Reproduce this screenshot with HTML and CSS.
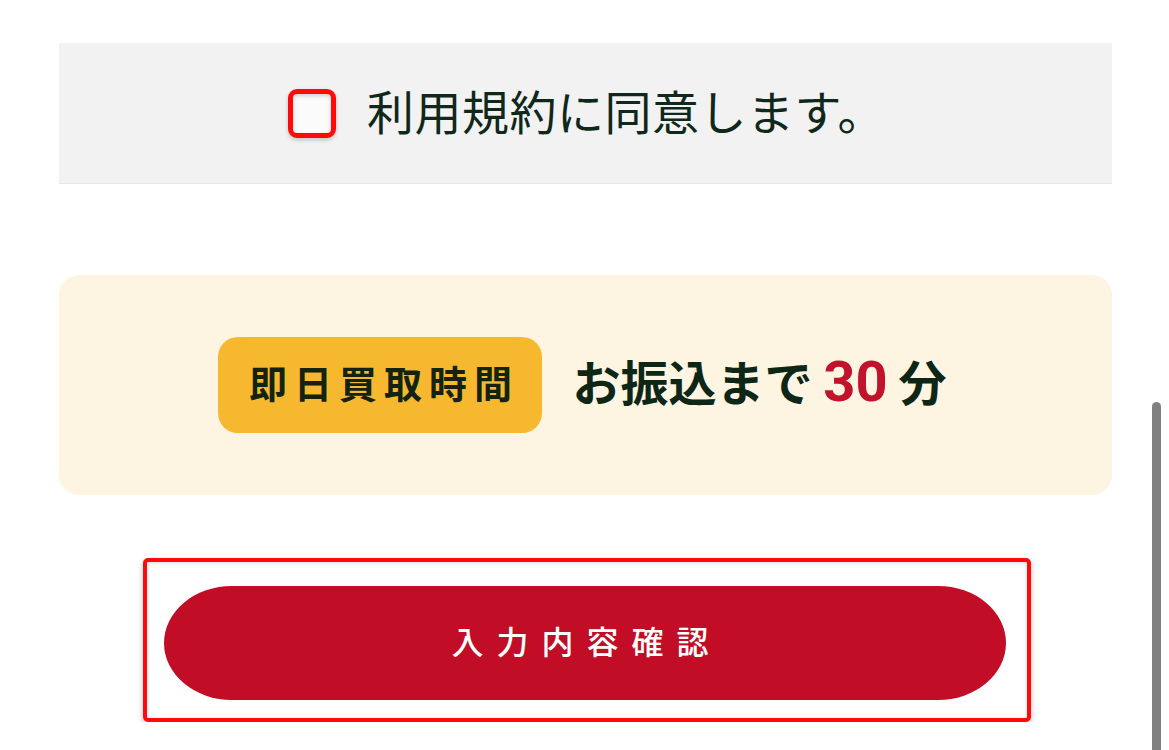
FILE: index.html
```html
<!DOCTYPE html>
<html lang="ja">
<head>
<meta charset="utf-8">
<title>確認</title>
<link rel="stylesheet" href="styles.css">
</head>
<body>
<main class="page">
  <section class="agree">
    <label class="agree-label">
      <span class="checkbox"></span>
      <span class="agree-text">利用規約に同意します。</span>
    </label>
  </section>

  <section class="notice">
    <span class="badge">即日買取時間</span>
    <p class="notice-text">お振込まで <span class="num">30</span> 分</p>
  </section>

  <div class="highlight">
    <button class="submit" type="button">入力内容確認</button>
  </div>
</main>
<div class="scrollbar"></div>
</body>
</html>
```

FILE: styles.css
```css
html, body {
  margin: 0;
  padding: 0;
  background: #ffffff;
  overflow: hidden;
}

body {
  font-family: "Noto Sans CJK JP", "Noto Sans", sans-serif;
  color: #0d2616;
}

.page {
  padding: 43px 57px 0 59px;
}

.agree {
  height: 140px;
  background: #f1f2f1;
  display: flex;
  align-items: center;
  justify-content: center;
  box-shadow: 0 1px 0 #e6e7e6;
}

.agree-label {
  display: flex;
  align-items: center;
  gap: 31px;
  margin-left: 2px;
}

.checkbox {
  width: 38px;
  height: 39px;
  border: 5px solid #ff0a0a;
  border-radius: 9px;
  background: #fbfbfb;
  box-shadow: inset 0 2px 4px rgba(0, 0, 0, 0.18), 0 2px 4px rgba(0, 0, 0, 0.2);
}

.agree-text {
  font-size: 47px;
  line-height: 1;
  font-weight: 400;
  color: #10271b;
  letter-spacing: 0.5px;
  margin-bottom: 7px;
}

.notice {
  margin-top: 92px;
  height: 220px;
  background: #fef4e2;
  border-radius: 20px;
  display: flex;
  align-items: center;
  justify-content: center;
  gap: 30px;
}

.badge {
  width: 324px;
  height: 96px;
  box-sizing: border-box;
  background: #f6b82f;
  border-radius: 20px;
  display: flex;
  align-items: center;
  justify-content: center;
  padding: 0 0 8px 7px;
  font-size: 38px;
  font-weight: 700;
  letter-spacing: 7px;
  color: #13230f;
  margin-left: -6px;
}

.notice-text {
  margin: 0 0 6px;
  font-size: 48px;
  font-weight: 700;
  line-height: 1;
  color: #0d2616;
  white-space: nowrap;
}

.num {
  font-family: "Roboto", "Liberation Sans", sans-serif;
  font-size: 56px;
  font-weight: 700;
  color: #c2132c;
}

.highlight {
  margin-top: 63px;
  margin-left: 84px;
  width: 888px;
  height: 164px;
  box-sizing: border-box;
  border: 4px solid #ff0a0a;
  border-radius: 5px;
  padding: 24px 0 0 17px;
  box-shadow: 0 3px 6px rgba(0, 0, 0, 0.25), inset 0 1px 4px rgba(0, 0, 0, 0.15);
}

.submit {
  display: flex;
  align-items: center;
  justify-content: center;
  width: 842px;
  height: 114px;
  border: none;
  border-radius: 68px / 57px;
  background: #c10d25;
  color: #ffffff;
  font-family: "Noto Sans CJK JP", "Noto Sans", sans-serif;
  font-size: 32px;
  font-weight: 500;
  letter-spacing: 13px;
  padding: 0 0 6px 3px;
  margin: 0;
}

.scrollbar {
  position: fixed;
  left: 1152px;
  top: 402px;
  width: 9px;
  height: 360px;
  border-radius: 5px;
  background: #808080;
}
```
